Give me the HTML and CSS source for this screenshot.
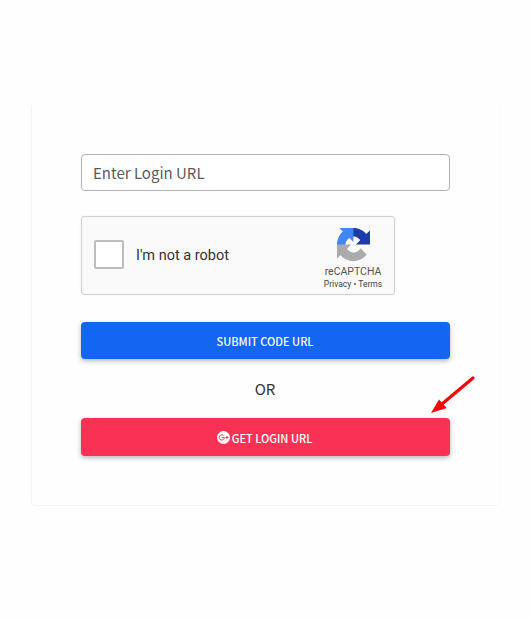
FILE: index.html
```html
<!DOCTYPE html>
<html lang="en">
<head>
<meta charset="utf-8">
<title>Login URL</title>
<link rel="stylesheet" href="styles.css">
</head>
<body>
<main class="card">
  <input class="field" type="text" placeholder="Enter Login URL" aria-label="Enter Login URL">
  <section class="captcha">
    <span class="check"></span>
    <span class="captcha-label">I'm not a robot</span>
    <div class="brand">
      <svg class="logo" viewBox="0 0 64 64" aria-hidden="true">
        <path fill="#1c3aa9" d="M64 31.955l-.033-1.37V4.687l-7.16 7.16C50.948 4.674 42.033.093 32.05.093c-10.4 0-19.622 4.96-25.458 12.64l11.736 11.86a15.55 15.55 0 0 1 4.754-5.334c2.05-1.6 4.952-2.906 8.968-2.906.485 0 .86.057 1.135.163 4.976.393 9.288 3.14 11.828 7.124l-8.307 8.307L64 31.953"/>
        <path fill="#4285f4" d="M31.862.094l-1.37.033H4.594l7.16 7.16C4.58 13.147 0 22.06 0 32.046c0 10.4 4.96 19.622 12.64 25.458L24.5 45.768a15.55 15.55 0 0 1-5.334-4.754c-1.6-2.05-2.906-4.952-2.906-8.968 0-.485.057-.86.163-1.135.393-4.976 3.14-9.288 7.124-11.828l8.307 8.307L31.86.095"/>
        <path fill="#ababab" d="M.001 32.045l.033 1.37v25.898l7.16-7.16c5.86 7.173 14.774 11.754 24.76 11.754 10.4 0 19.622-4.96 25.458-12.64l-11.736-11.86a15.55 15.55 0 0 1-4.754 5.334c-2.05 1.6-4.952 2.906-8.968 2.906-.485 0-.86-.057-1.135-.163-4.976-.393-9.288-3.14-11.828-7.124l8.307-8.307c-10.522.04-22.4.066-27.295-.005"/>
      </svg>
      <span class="brand-name">reCAPTCHA</span>
      <span class="brand-links">Privacy • Terms</span>
    </div>
  </section>
  <button class="btn submit">SUBMIT CODE URL</button>
  <p class="or">OR</p>
  <button class="btn get">
    <svg class="gplus" viewBox="0 0 26 26" aria-hidden="true">
      <circle cx="13" cy="13" r="13" fill="#fff"/>
      <path d="M13.3 9.3A5.2 5.2 0 1 0 14.8 13.2H9.8M17 13h6M20 10v6" fill="none" stroke="#f93154" stroke-width="2"/>
    </svg>
    <span>GET LOGIN URL</span>
  </button>
  <svg class="arrow" viewBox="0 0 44 38" aria-hidden="true">
    <path d="M42 2L11 28" stroke="#f00808" stroke-width="3.2" stroke-linecap="round"/>
    <path d="M0 37L8 23.6L15.8 32Z" fill="#f00808"/>
  </svg>
</main>
</body>
</html>
```
FILE: styles.css
```css
* { box-sizing: border-box; }
body {
  margin: 0;
  padding: 103px 30px 0 31px;
  background: #fefefe;
  font-family: "Noto Sans CJK JP", "Noto Sans", sans-serif;
}
.card {
  position: relative;
  display: flex;
  flex-direction: column;
  height: 403px;
  padding: 50px 49px 0 49px;
  border: 1px solid #f5f5f5;
  border-top-color: #fdfdfd;
  border-right-color: #fbfbfb;
  border-radius: 5px;
}
.field {
  height: 37px;
  padding: 0 11px;
  border: 1px solid #b3b3b3;
  border-radius: 4px;
  background: #fff;
  font: 15px "Noto Sans CJK JP", sans-serif;
  outline: 0;
}
.field::placeholder { color: #5a5a5a; opacity: 1; }
.captcha {
  display: flex;
  align-items: center;
  width: 314px;
  height: 79px;
  margin-top: 25px;
  padding: 0 11px 0 12px;
  border: 1px solid #d0d0d0;
  border-radius: 3px;
  background: #fafafa;
  box-shadow: 0 0 3px rgba(0, 0, 0, .06);
  font-family: Roboto, sans-serif;
}
.check {
  width: 30px;
  height: 29px;
  margin-top: -3px;
  border: 2px solid #bdbdbd;
  border-radius: 2px;
  background: #fff;
}
.captcha-label {
  margin-left: 12px;
  color: #333;
  font-size: 14.5px;
}
.brand {
  display: flex;
  flex-direction: column;
  align-items: center;
  width: 60px;
  margin-top: 7px;
  margin-left: auto;
  color: #555;
  white-space: nowrap;
}
.logo { width: 33px; height: 33px; }
.brand-name { margin-top: 4px; font-size: 10.5px; line-height: 13px; }
.brand-links { font-size: 8.5px; line-height: 12px; color: #444; }
.btn {
  display: flex;
  align-items: center;
  justify-content: center;
  height: 38px;
  padding: 0;
  border: 0;
  border-radius: 4px;
  color: #fff;
  font: 500 11px "Noto Sans CJK JP", sans-serif;
  box-shadow: 0 2px 5px rgba(0, 0, 0, .28);
}
.submit { height: 37px; margin-top: 27px; padding-right: 1px; background: #1266f1; }
.get { gap: 2px; padding: 1px 2px 0 0; background: #f93154; }
.gplus { width: 13px; height: 13px; }
.or {
  margin: 0;
  height: 59px;
  padding-right: 1px;
  color: #333;
  font-size: 15px;
  line-height: 59px;
  text-align: center;
}
.arrow {
  position: absolute;
  left: 399px;
  top: 272px;
  width: 44px;
  height: 38px;
}
```
